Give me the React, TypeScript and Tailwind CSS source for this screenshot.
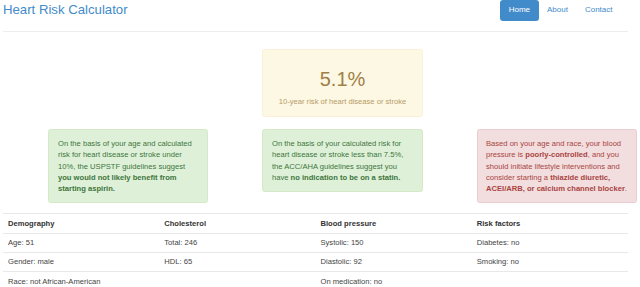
const rows = [
  ["Age: 51", "Total: 246", "Systolic: 150", "Diabetes: no"],
  ["Gender: male", "HDL: 65", "Diastolic: 92", "Smoking: no"],
  ["Race: not African-American", "", "On medication: no", ""],
];

const headers = ["Demography", "Cholesterol", "Blood pressure", "Risk factors"];

const App = () => {
  return (
    <div className="w-[640px] h-[287px] overflow-hidden bg-white pl-[3px] pr-[12px] font-['Liberation_Sans',Arial,sans-serif] text-[#333]">
      {/* Navbar */}
      <div className="flex h-[31px] items-start justify-between">
        <div className="h-[20px] flex items-center text-[13.2px] leading-[20px] text-[#428bca]">
          Heart Risk Calculator
        </div>
        <div className="flex items-center text-[8px] leading-[20px] mr-[7px]">
          <span className="px-[8.5px] h-[20.5px] flex items-center rounded-[3px] bg-[#428bca] text-white">Home</span>
          <span className="px-[8.5px] text-[#428bca]">About</span>
          <span className="px-[8.5px] text-[#428bca]">Contact</span>
        </div>
      </div>
      <div className="border-t border-[#eee]" />

      {/* Risk */}
      <div className="mt-[17px] ml-[259px]">
        <div className="w-[161px] h-[68px] rounded-[2.5px] border border-[#faf0d8] bg-[#fcf8e3] text-[#8a6d3b] text-center pt-[18px]">
          <div className="text-[20px] leading-[22px] text-[#a07f48]">5.1%</div>
          <div className="mt-[6px] text-[7.6px] leading-[11.25px] text-[#b89a68]">10-year risk of heart disease or stroke</div>
        </div>
      </div>

      {/* Recommendations */}
      <div className="mt-[12px] ml-[45px] flex items-start gap-[54px] text-[7.6px] leading-[11.25px]">
        <div className="w-[160px] shrink-0 rounded-[2.5px] border border-[#d6e9c6] bg-[#dff0d8] text-[#3c763d] px-[9px] py-[8px]">
          On the basis of your age and calculated risk for heart disease or stroke under 10%, the USPSTF guidelines suggest{" "}
          <b>you would not likely benefit from starting aspirin.</b>
        </div>
        <div className="w-[161px] shrink-0 rounded-[2.5px] border border-[#d6e9c6] bg-[#dff0d8] text-[#3c763d] px-[9px] py-[8px]">
          On the basis of your calculated risk for heart disease or stroke less than 7.5%, the ACC/AHA guidelines suggest you have{" "}
          <b>no indication to be on a statin.</b>
        </div>
        <div className="w-[160px] shrink-0 rounded-[2.5px] border border-[#ebccd1] bg-[#f2dede] text-[#a94442] pl-[8px] pr-[7px] py-[8px]">
          Based on your age and race, your blood pressure is <b>poorly-controlled</b>, and you should initiate lifestyle interventions and consider starting a{" "}
          <b>thiazide diuretic, ACEI/ARB, or calcium channel blocker</b>.
        </div>
      </div>

      {/* Inputs table */}
      <table className="mt-[10px] w-[625px] table-fixed border-collapse text-[7.6px] leading-[11.25px]">
        <thead>
          <tr className="border-t border-b border-[#e8e8e8]">
            {headers.map((h) => (
              <th key={h} className="text-left font-bold px-[5px] py-[3.5px]">
                {h}
              </th>
            ))}
          </tr>
        </thead>
        <tbody>
          {rows.map((r, i) => (
            <tr key={i} className="border-t border-[#e8e8e8]">
              {r.map((c, j) => (
                <td key={j} className="px-[5px] py-[3.5px] text-[#444]">
                  {c}
                </td>
              ))}
            </tr>
          ))}
        </tbody>
      </table>
    </div>
  );
};

export default App;
